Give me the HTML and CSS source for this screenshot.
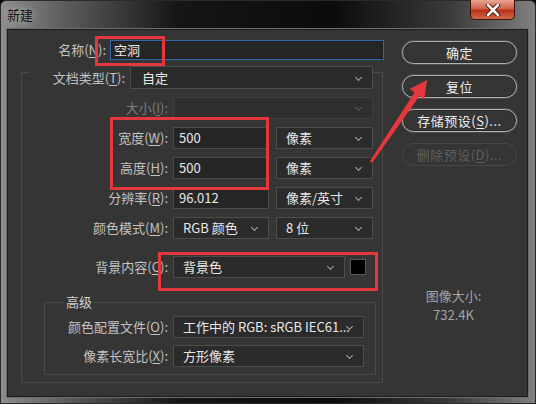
FILE: index.html
```html
<!DOCTYPE html>
<html lang="zh-CN">
<head>
    <meta charset="UTF-8">
    <title>新建</title>
    <link rel="stylesheet" href="styles.css">
</head>
<body>
    <div class="window">
        <div class="titlebar">
            <span class="title">新建</span>
            <span class="close">
                <svg width="16" height="12" viewBox="0 0 16 12">
                    <path d="M3 1 L13 11 M13 1 L3 11" stroke="#3a1208" stroke-width="4.5" stroke-linecap="round"/>
                    <path d="M3 1 L13 11 M13 1 L3 11" stroke="#ffffff" stroke-width="2.5" stroke-linecap="round"/>
                </svg>
            </span>
        </div>
        <div class="client">
            <div class="form">
                <div class="name-row">
                    <label class="lbl name-lbl">名称(<u>N</u>):</label>
                    <div class="input focus name-input">空洞</div>
                </div>
                <div class="preset">
                    <div class="preset-head">
                        <label class="lbl head-lbl">文档类型(<u>T</u>):</label>
                        <div class="select head-select">自定</div>
                    </div>
                    <div class="row first">
                        <label class="lbl disabled">大小(<u>I</u>):</label>
                        <div class="select off full"></div>
                    </div>
                    <div class="row">
                        <label class="lbl">宽度(<u>W</u>):</label>
                        <div class="input num">500</div>
                        <div class="select unit">像素</div>
                    </div>
                    <div class="row">
                        <label class="lbl">高度(<u>H</u>):</label>
                        <div class="input num">500</div>
                        <div class="select unit">像素</div>
                    </div>
                    <div class="row">
                        <label class="lbl">分辨率(<u>R</u>):</label>
                        <div class="input num">96.012</div>
                        <div class="select unit">像素/英寸</div>
                    </div>
                    <div class="row">
                        <label class="lbl">颜色模式(<u>M</u>):</label>
                        <div class="select num">RGB 颜色</div>
                        <div class="select unit">8 位</div>
                    </div>
                    <div class="row bg-row">
                        <label class="lbl">背景内容(<u>C</u>):</label>
                        <div class="select bg-select">背景色</div>
                        <span class="swatch"></span>
                    </div>
                    <div class="advanced">
                        <span class="legend">高级</span>
                        <div class="row adv-first">
                            <label class="lbl adv-lbl">颜色配置文件(<u>O</u>):</label>
                            <div class="select adv-select">工作中的 RGB: sRGB IEC61...</div>
                        </div>
                        <div class="row adv-second">
                            <label class="lbl adv-lbl">像素长宽比(<u>X</u>):</label>
                            <div class="select adv-select">方形像素</div>
                        </div>
                    </div>
                </div>
            </div>
            <div class="side">
                <button class="btn">确定</button>
                <button class="btn">复位</button>
                <button class="btn">存储预设(<u>S</u>)...</button>
                <button class="btn off">删除预设(<u>D</u>)...</button>
                <div class="info">
                    <p>图像大小:</p>
                    <p>732.4K</p>
                </div>
            </div>
        </div>
    </div>
    <svg class="marks" width="536" height="404" viewBox="0 0 536 404">
        <rect x="96.5" y="37.5" width="67" height="27" fill="none" stroke="#e5373e" stroke-width="3"/>
        <rect x="111.5" y="118.5" width="156" height="70" fill="none" stroke="#e5373e" stroke-width="3"/>
        <rect x="159.5" y="253.5" width="217" height="36" fill="none" stroke="#e5373e" stroke-width="3"/>
        <polygon points="369.8,161.2 414.5,92.5 409.6,89.1 427,80 424.4,99.3 419.5,95.9 372.2,162.8" fill="#e5373e"/>
    </svg>
</body>
</html>
```

FILE: styles.css
```css
* {
    margin: 0;
    padding: 0;
    box-sizing: border-box;
}
body {
    position: relative;
    width: 536px;
    height: 404px;
    overflow: hidden;
    background-color: #000000;
    font-family: "Noto Sans CJK SC", "Noto Sans", sans-serif;
    font-size: 13px;
}
u {
    text-decoration: underline;
    text-underline-offset: 2px;
}
.window {
    width: 536px;
    height: 404px;
    border: 1px solid #2a2a2a;
    border-radius: 6px 6px 0 0;
    background: linear-gradient(to right, #8e8e8e 0, #5c5c5c 12%, #161616 33%, #0b0b0b 62%, #3a3a3a 84%, #808080 100%);
    display: flex;
    flex-direction: column;
}
.titlebar {
    height: 28px;
    display: flex;
    justify-content: space-between;
    align-items: flex-start;
}
.title {
    padding: 4px 0 0 6px;
    line-height: 19px;
    color: #111111;
    text-shadow: 0 0 6px rgba(255, 255, 255, .55);
}
.close {
    width: 45px;
    height: 20px;
    margin: -1px 20px 0 0;
    border: 1px solid #3e140c;
    border-top: none;
    border-radius: 0 0 5px 5px;
    background: linear-gradient(to bottom, #e9a692 0, #d0624a 45%, #b8321c 55%, #d4674a 100%);
    display: flex;
    align-items: center;
    justify-content: center;
}
.client {
    height: 368px;
    margin: 0 7px 0 6px;
    border: 1px solid #1c1c1c;
    box-shadow: 0 0 0 1px #6e6e6e;
    background-color: #353535;
    display: flex;
}
.form {
    width: 382px;
}
.lbl {
    color: #c2c2c2;
    text-align: right;
    white-space: nowrap;
    line-height: 22px;
}
.lbl.disabled {
    color: #7c7c7c;
}
.input, .select {
    height: 22px;
    line-height: 20px;
    color: #e8e8e8;
    white-space: nowrap;
    overflow: hidden;
}
.input {
    background-color: #262626;
    border: 1px solid #4a4a4a;
    padding-left: 5px;
}
.input.focus {
    border-color: #3569ab;
    box-shadow: inset 0 0 0 1px #1e1e1e;
}
.select {
    position: relative;
    background-color: #2b2b2b;
    border: 1px solid #4c4c4c;
    padding-left: 9px;
}
.select:after {
    content: '';
    position: absolute;
    right: 11px;
    top: 7px;
    width: 4px;
    height: 4px;
    border-right: 1px solid #a8a8a8;
    border-bottom: 1px solid #a8a8a8;
    transform: rotate(45deg);
}
.select.off {
    background-color: #303030;
    border-color: #3e3e3e;
}
.select.off:after {
    border-color: #5a5a5a;
}
.name-row {
    display: flex;
    margin-top: 10px;
}
.name-lbl {
    width: 98px;
    margin-right: 4px;
    line-height: 20px;
}
.name-input {
    width: 274px;
    height: 20px;
    line-height: 18px;
    padding-left: 3px;
}
.preset {
    width: 362px;
    margin: 12px 0 0 13px;
    border: 1px solid #4a4a4a;
}
.preset-head {
    display: flex;
    width: 343px;
    margin: -7px 0 0 8px;
    background-color: #353535;
}
.head-lbl {
    width: 95px;
    margin-right: 5px;
    line-height: 23px;
}
.head-select {
    width: 243px;
    height: 23px;
    line-height: 21px;
    padding-left: 11px;
}
.head-select:after {
    top: 8px;
}
.row {
    display: flex;
    align-items: center;
    height: 22px;
    margin-top: 8px;
}
.row .lbl {
    width: 146px;
    margin-right: 5px;
}
.row .num {
    width: 96px;
}
.row .unit {
    width: 97px;
    margin-left: 7px;
}
.full {
    width: 200px;
}
.bg-row {
    margin-top: 17px;
}
.bg-select {
    width: 172px;
}
.swatch {
    width: 16px;
    height: 16px;
    margin-left: 5px;
    background-color: #000000;
    border: 1px solid #5a5a5a;
}
.advanced {
    margin: 24px 6px 7px 22px;
    border: 1px solid #4a4a4a;
    padding-bottom: 7px;
}
.legend {
    display: block;
    width: fit-content;
    margin: -10px 0 0 19px;
    padding: 0 2px;
    line-height: 18px;
    background-color: #353535;
    color: #d0d0d0;
}
.advanced .row .adv-lbl {
    width: 123px;
}
.adv-first {
    margin-top: 5px;
}
.adv-second {
    margin-top: 7px;
}
.adv-select {
    width: 191px;
}
.side {
    flex: 1;
    padding: 11px 0 0 12px;
    display: flex;
    flex-direction: column;
}
.btn {
    width: 115px;
    height: 23px;
    margin-bottom: 11px;
    border: 1px solid #b2b2b2;
    border-radius: 12px;
    box-shadow: 0 0 0 1px #4a4a4a, inset 0 0 0 1px #2c2c2c;
    background-color: #353535;
    color: #ececec;
    font-family: inherit;
    font-size: 13px;
    line-height: 20px;
    letter-spacing: .5px;
}
.btn.off {
    border-color: #474747;
    box-shadow: none;
    color: #5e5e5e;
}
.info {
    margin-top: 109px;
    width: 115px;
    margin-left: -12px;
    padding-left: 12px;
    text-align: center;
    color: #a4a4a4;
    line-height: 19px;
}
.marks {
    position: absolute;
    top: 0;
    left: 0;
    pointer-events: none;
}
```
